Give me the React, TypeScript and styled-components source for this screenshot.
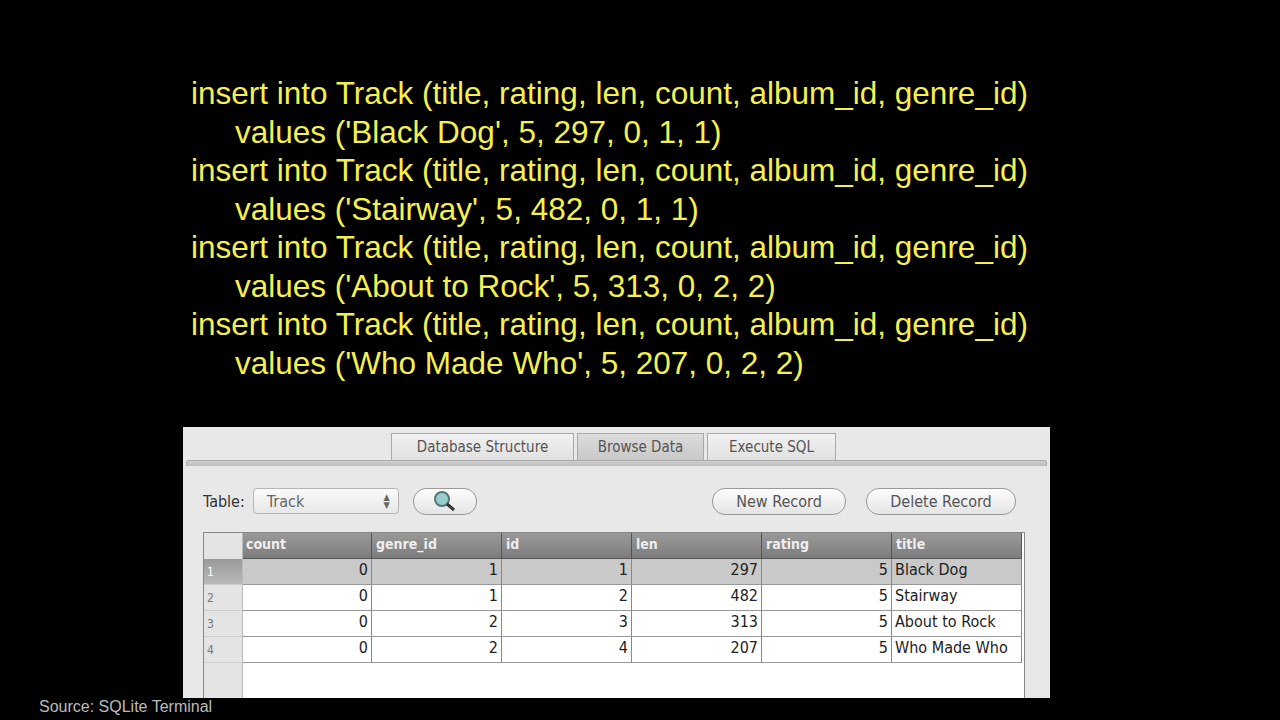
import React from "react";
import styled, { createGlobalStyle } from "styled-components";

const G = createGlobalStyle`
  html,body{margin:0;padding:0;background:#000;}
  body{width:1280px;height:720px;overflow:hidden;font-family:"Liberation Sans",Arial,sans-serif;}
`;
const Page = styled.div`width:1280px;height:720px;background:#000;display:flex;flex-direction:column;position:relative;`;
const Code = styled.div`padding:74px 0 0 191px;color:#f5f050;font-size:31.5px;line-height:38.5px;height:427px;box-sizing:border-box;flex-shrink:0;`;
const Line = styled.div<{ $i?: boolean }>`white-space:pre;padding-left:${p => (p.$i ? 44 : 0)}px;`;
const Shot = styled.div`margin-left:183px;width:867px;height:271px;background:#e8e8e8;font-family:"DejaVu Sans Condensed","DejaVu Sans",sans-serif;color:#333;display:flex;flex-direction:column;overflow:hidden;flex-shrink:0;`;
const Tabs = styled.div`display:flex;padding:6px 0 0 208px;gap:3px;height:33px;box-sizing:border-box;align-items:flex-end;`;
const TabBar = styled.div`height:5px;margin:0 3px;background:linear-gradient(#d0d0d0,#bcbcbc);border-radius:3px 3px 0 0;border:1px solid #aaa;border-bottom:none;`;
const Tab = styled.div<{ $a?: boolean; $w: number }>`width:${p => p.$w}px;height:27px;display:flex;align-items:center;justify-content:center;font-size:15px;color:#555;background:${p => (p.$a ? "linear-gradient(#dcdcdc,#c8c8c8)" : "linear-gradient(#f2f2f2,#e0e0e0)")};border:1px solid #aaa;border-bottom:none;box-sizing:border-box;`;
const Toolbar = styled.div`display:flex;align-items:center;padding:22px 34px 0 20px;height:26px;font-size:16px;`;
const Sel = styled.div`margin-left:8px;width:146px;height:26px;border:1px solid #b5b5b5;border-radius:4px;background:linear-gradient(#fafafa,#e8e8e8);display:flex;align-items:center;justify-content:space-between;padding:0 8px 0 13px;box-sizing:border-box;color:#666;`;
const Pill = styled.div<{ $w: number }>`width:${p => p.$w}px;height:27px;border:1px solid #999;border-radius:13px;background:linear-gradient(#fdfdfd,#e4e4e4);display:flex;align-items:center;justify-content:center;color:#555;box-sizing:border-box;`;
const Table = styled.div`margin:18px 0 0 20px;width:820px;flex:1;background:#fff;border:1px solid #888;border-bottom:none;display:grid;grid-template-columns:38px repeat(6,130px);grid-auto-rows:26px;align-content:start;font-size:15px;position:relative;`;
const Gutter = styled.div`position:absolute;left:0;top:0;bottom:0;width:38px;background:#e4e4e4;border-right:1px solid #bbb;`;
const H = styled.div`background:linear-gradient(#9a9a9a,#7c7c7c);color:#eee;font-size:14px;padding:3px 4px;border-right:1px solid #555;border-bottom:1px solid #555;box-sizing:border-box;font-weight:bold;`;
const Corner = styled.div`background:#e4e4e4;position:relative;z-index:1;`;
const RN = styled.div<{ $s?: boolean }>`background:${p => (p.$s ? "linear-gradient(#9a9a9a,#b8b8b8)" : "#e4e4e4")};color:${p => (p.$s ? "#fff" : "#777")};font-size:12px;padding:6px 3px 0;box-sizing:border-box;border-bottom:1px solid #ccc;position:relative;z-index:1;`;
const C = styled.div<{ $s?: boolean; $l?: boolean }>`background:${p => (p.$s ? "#c9c9c9" : "#fff")};border-right:1px solid #888;border-bottom:1px solid #999;text-align:${p => (p.$l ? "left" : "right")};padding:1px 3px;box-sizing:border-box;color:#222;font-size:16px;`;
const Src = styled.div`position:absolute;left:39px;top:698px;color:#bbb;font-size:16px;`;

const rows = [["0","1","1","297","5","Black Dog"],["0","1","2","482","5","Stairway"],["0","2","3","313","5","About to Rock"],["0","2","4","207","5","Who Made Who"]];
const cols = ["count","genre_id","id","len","rating","title"];

export default function App() {
  return (
    <Page>
      <G />
      <Code>
        <Line>insert into Track (title, rating, len, count, album_id, genre_id)</Line>
        <Line $i>values ('Black Dog', 5, 297, 0, 1, 1)</Line>
        <Line>insert into Track (title, rating, len, count, album_id, genre_id)</Line>
        <Line $i>values ('Stairway', 5, 482, 0, 1, 1)</Line>
        <Line>insert into Track (title, rating, len, count, album_id, genre_id)</Line>
        <Line $i>values ('About to Rock', 5, 313, 0, 2, 2)</Line>
        <Line>insert into Track (title, rating, len, count, album_id, genre_id)</Line>
        <Line $i>values ('Who Made Who', 5, 207, 0, 2, 2)</Line>
      </Code>
      <Shot>
        <Tabs>
          <Tab $w={183}>Database Structure</Tab><Tab $a $w={127}>Browse Data</Tab><Tab $w={129}>Execute SQL</Tab>
        </Tabs>
        <TabBar />
        <Toolbar>
          Table:<Sel>Track<span style={{ fontSize: 9, lineHeight: "8px" }}>▲<br />▼</span></Sel>
          <div style={{ width: 14 }} />
          <Pill $w={64}>
            <svg width="26" height="24" viewBox="0 0 26 24"><circle cx="10" cy="10" r="7" fill="#9cc" stroke="#577" strokeWidth="2" /><line x1="15" y1="15" x2="22" y2="21" stroke="#333" strokeWidth="3" /></svg>
          </Pill>
          <div style={{ flex: 1 }} />
          <Pill $w={134}>New Record</Pill>
          <div style={{ width: 20 }} />
          <Pill $w={150}>Delete Record</Pill>
        </Toolbar>
        <Table>
          <Gutter />
          <Corner />
          {cols.map(c => <H key={c}>{c}</H>)}
          {rows.map((r, i) => (
            <React.Fragment key={i}>
              <RN $s={i === 0}>{i + 1}</RN>
              {r.map((v, j) => <C key={j} $s={i === 0} $l={j === 5}>{v}</C>)}
            </React.Fragment>
          ))}
        </Table>
      </Shot>
      <Src>Source: SQLite Terminal</Src>
    </Page>
  );
}
